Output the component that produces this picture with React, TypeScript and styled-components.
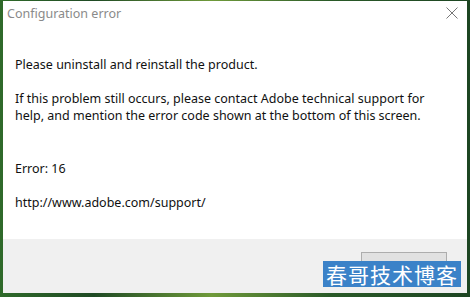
import React from 'react';
import styled, { createGlobalStyle } from 'styled-components';

const Global = createGlobalStyle`
  html, body { margin: 0; padding: 0; }
  body { background: #1f4a24; font-family: "Noto Sans", "Open Sans", sans-serif; }
`

const Desktop = styled.div`
  width: 470px;
  height: 297px;
  box-sizing: border-box;
  padding: 1px 3px 4px 3px;
  background: linear-gradient(90deg, #2f6a2a 0%, #1f4a24 20%, #6f9a3a 45%, #2a5a28 70%, #1d4522 100%);
  display: flex;
`

const Window = styled.div`
  flex: 1;
  display: flex;
  flex-direction: column;
  background: #fff;
  position: relative;
`

const TitleBar = styled.div`
  height: 24px;
  display: flex;
  align-items: center;
  justify-content: space-between;
  padding: 0 9px 0 4px;
`

const Title = styled.span`
  font-size: 12.5px;
  color: #8a8a8a;
  font-family: "Noto Sans", sans-serif;
`

const Content = styled.div`
  flex: 1;
  padding: 31px 12px 0 12px;
  color: #111;
  font-size: 12.5px;
  line-height: 17px;
  font-family: "Noto Sans", sans-serif;
`

const Para = styled.p<{ $gap?: number }>`
  margin: 0 0 ${p => p.$gap ?? 17}px 0;
`

const Footer = styled.div`
  height: 54px;
  background: #f0f0f0;
  display: flex;
  justify-content: flex-end;
  align-items: flex-start;
  padding: 13px 20px 0 0;
  box-sizing: border-box;
`

const Button = styled.div`
  width: 86px;
  height: 26px;
  box-sizing: border-box;
  background: #e1e1e1;
  border: 1px solid #adadad;
`

const Watermark = styled.div`
  position: absolute;
  right: 6px;
  bottom: 6px;
  width: 138px;
  height: 26px;
  background: #3b82c8;
  color: #fff;
  font-size: 21px;
  line-height: 26px;
  text-align: center;
  letter-spacing: 1px;
  font-family: "Noto Sans CJK SC", serif;
`

const App = () => {
    return (
        <Desktop>
            <Global />
            <Window>
                <TitleBar>
                    <Title>Configuration error</Title>
                    <svg width="12" height="12" viewBox="0 0 12 12">
                        <path d="M0.5 0.5 L11.5 11.5 M11.5 0.5 L0.5 11.5" stroke="#777" strokeWidth="1" fill="none" />
                    </svg>
                </TitleBar>
                <Content>
                    <Para>Please uninstall and reinstall the product.</Para>
                    <Para $gap={36}>
                        If this problem still occurs, please contact Adobe technical support for
                        help, and mention the error code shown at the bottom of this screen.
                    </Para>
                    <Para>Error: 16</Para>
                    <Para>http://www.adobe.com/support/</Para>
                </Content>
                <Footer>
                    <Button />
                </Footer>
                <Watermark>春哥技术博客</Watermark>
            </Window>
        </Desktop>
    )
};

export default App;
